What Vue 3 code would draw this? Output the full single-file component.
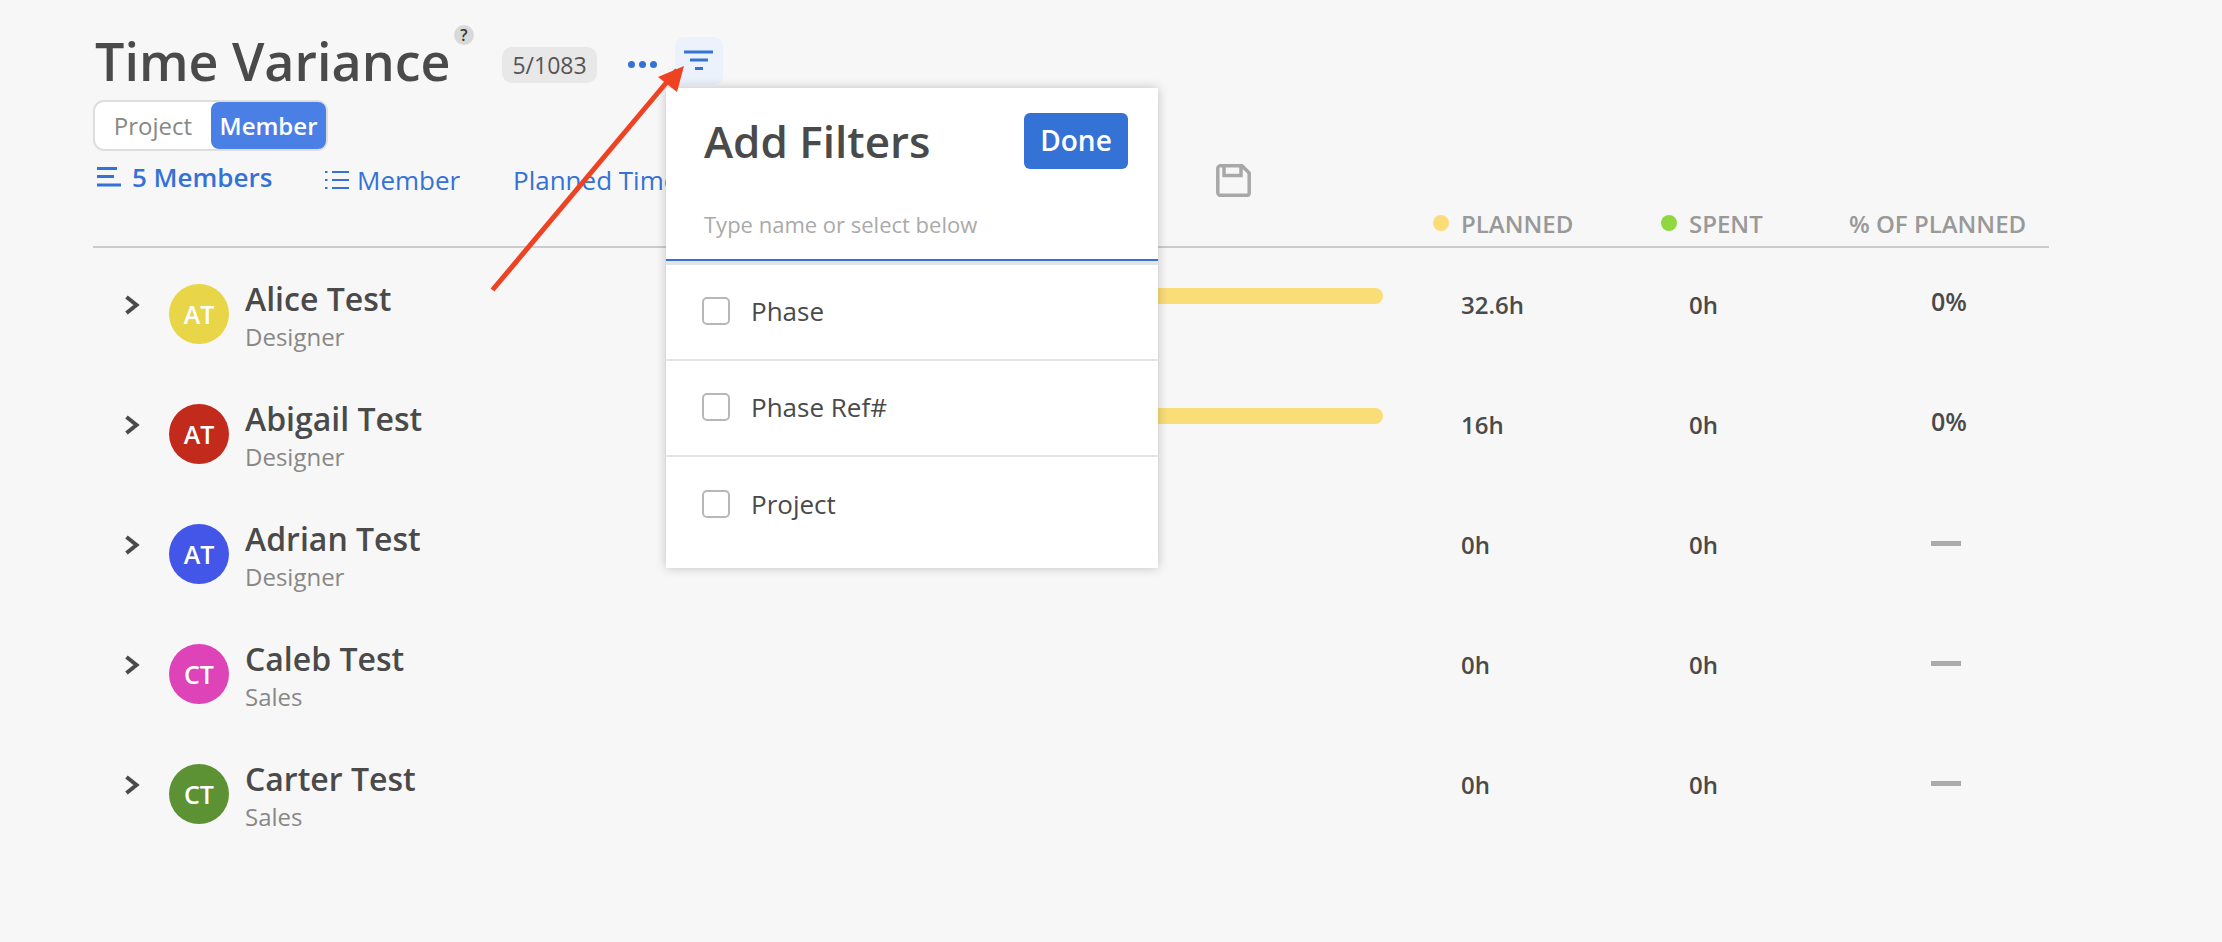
<script setup>
const rows = [
  { name: 'Alice Test', role: 'Designer', init: 'AT', color: '#e8d548', bar: true, planned: '32.6h', spent: '0h', pct: '0%' },
  { name: 'Abigail Test', role: 'Designer', init: 'AT', color: '#c22b1c', bar: true, planned: '16h', spent: '0h', pct: '0%' },
  { name: 'Adrian Test', role: 'Designer', init: 'AT', color: '#4356e8', bar: false, planned: '0h', spent: '0h', pct: '' },
  { name: 'Caleb Test', role: 'Sales', init: 'CT', color: '#de43b8', bar: false, planned: '0h', spent: '0h', pct: '' },
  { name: 'Carter Test', role: 'Sales', init: 'CT', color: '#5c9134', bar: false, planned: '0h', spent: '0h', pct: '' },
]
const filters = ['Phase', 'Phase Ref#', 'Project']
</script>

<template>
  <div class="page">
    <div class="title-row">
      <h1 class="title">Time Variance</h1>
      <span class="help">?</span>
      <span class="count">5/1083</span>
      <span class="dots"><i></i><i></i><i></i></span>
      <span class="filter-btn">
        <svg width="48" height="48" viewBox="0 0 48 48">
          <path d="M9 15h29M15 23h18M20 31.500h8" stroke="#3572d5" stroke-width="3" fill="none" />
        </svg>
      </span>
    </div>

    <div class="toggle">
      <span class="opt">Project</span>
      <span class="opt active">Member</span>
    </div>

    <div class="nav">
      <span class="nav-item first">
        <svg width="24" height="20" viewBox="0 0 24 20">
          <path d="M0 1.500h20M0 9.500h17M0 18h24" stroke="#3572d5" stroke-width="3" fill="none" />
        </svg>
        <b>5 Members</b>
      </span>
      <span class="nav-item second">
        <svg width="24" height="20" viewBox="0 0 24 20">
          <path d="M7 2h17M7 10h17M7 18h17" stroke="#3572d5" stroke-width="2" fill="none" />
          <path d="M0 2h2.500M0 10h2.500M0 18h2.500" stroke="#3572d5" stroke-width="2" fill="none" />
        </svg>
        Member
      </span>
      <span class="nav-item third">Planned Time</span>
      <svg class="save" width="35" height="33" viewBox="0 0 35 33">
        <path d="M3.500 1.800H26L33.200 9V29a2.500 2.500 0 0 1-2.500 2.300H3.500A2.500 2.500 0 0 1 1.800 29V4a2.500 2.500 0 0 1 1.700-2.200Z" stroke="#a8a8a8" stroke-width="3.500" fill="none" />
        <path d="M8 2V11.500H25V2" stroke="#a8a8a8" stroke-width="3.500" fill="none" />
      </svg>
    </div>

    <div class="grid head">
      <span></span>
      <span class="h-cell"><i class="dot yellow"></i>PLANNED</span>
      <span class="h-cell"><i class="dot green"></i>SPENT</span>
      <span class="h-cell">% OF PLANNED</span>
    </div>

    <div class="list">
      <div v-for="r in rows" :key="r.name" class="grid row">
        <div class="left">
          <svg class="chev" width="16" height="20" viewBox="0 0 16 20">
            <path d="M2.500 2L12.500 10L2.500 18" stroke="#4a4a4a" stroke-width="4" fill="none" />
          </svg>
          <span class="avatar" :style="{ background: r.color }">{{ r.init }}</span>
          <div class="who">
            <div class="name">{{ r.name }}</div>
            <div class="role">{{ r.role }}</div>
          </div>
          <span v-if="r.bar" class="bar"></span>
        </div>
        <span class="val">{{ r.planned }}</span>
        <span class="val">{{ r.spent }}</span>
        <span v-if="r.pct" class="pct">{{ r.pct }}</span>
        <span v-else class="dash"></span>
      </div>
    </div>

    <div class="popup">
      <div class="pop-head">
        <span class="pop-title">Add Filters</span>
        <span class="done">Done</span>
      </div>
      <div class="search">Type name or select below</div>
      <div class="items">
        <div v-for="f in filters" :key="f" class="item">
          <span class="box"></span>
          <span>{{ f }}</span>
        </div>
      </div>
    </div>

    <svg class="arrow" width="240" height="260" viewBox="0 0 240 260">
      <path d="M2.500 245L187 25" stroke="#ee4323" stroke-width="5" fill="none" />
      <path d="M194 21L168 32L187 47Z" fill="#ee4323" />
    </svg>
  </div>
</template>

<style scoped>
.page {
  position: relative;
  box-sizing: border-box;
  width: 2222px;
  height: 942px;
  overflow: hidden;
  padding: 37px 0 0 93px;
  background: #f7f7f7;
  font-family: "Open Sans", "Noto Sans", sans-serif;
  color: #4a4a4a;
}
.title-row {
  display: flex;
  align-items: center;
  height: 48px;
}
.title {
  flex: none;
  width: 360px;
  margin: 0 0 0 2px;
  font-size: 52px;
  font-weight: 560;
  line-height: 48px;
  white-space: nowrap;
  color: #4a4a4a;
}
.help {
  align-self: flex-start;
  width: 20px;
  height: 20px;
  margin: -12px 0 0 -1px;
  border-radius: 50%;
  background: #d9d9d9;
  color: #333;
  font-size: 16px;
  font-weight: 600;
  line-height: 20px;
  text-align: center;
}
.count {
  width: 95px;
  height: 36px;
  margin: 7px 0 0 28px;
  border-radius: 10px;
  background: #e8e8e8;
  color: #555;
  font-size: 23px;
  line-height: 36px;
  text-align: center;
}
.dots {
  display: flex;
  gap: 4px;
  margin: 6px 0 0 31px;
}
.dots i {
  width: 7px;
  height: 7px;
  border-radius: 50%;
  background: #3572d5;
}
.filter-btn {
  display: flex;
  width: 48px;
  height: 48px;
  margin-left: 18px;
  border-radius: 9px;
  background: #ebf2fc;
}
.toggle {
  display: flex;
  box-sizing: border-box;
  width: 235px;
  height: 51px;
  margin-top: 15px;
  border: 2px solid #dedede;
  border-radius: 11px;
  background: #fff;
}
.opt {
  width: 117px;
  font-size: 24px;
  line-height: 47px;
  text-align: center;
  color: #888;
}
.active {
  width: 116px;
  border-radius: 8px;
  background: #4a7fe6;
  color: #fff;
  font-weight: 560;
}
.nav {
  display: flex;
  align-items: center;
  height: 59px;
  color: #3572d5;
  font-size: 26px;
}
.nav-item {
  display: flex;
  align-items: center;
  white-space: nowrap;
}
.first {
  box-sizing: border-box;
  width: 232px;
  padding: 0 0 7px 4px;
  gap: 11px;
}
.first b {
  font-weight: 600;
}
.second {
  width: 188px;
  padding-bottom: 2px;
  gap: 8px;
}
.third {
  width: 703px;
  padding-bottom: 2px;
}
.save {
  flex: none;
}
.grid {
  display: grid;
  grid-template-columns: 1340px 228px 188px 200px;
  width: 1956px;
}
.head {
  box-sizing: border-box;
  height: 38px;
  border-bottom: 2px solid #cccccc;
  align-items: start;
}
.h-cell {
  display: flex;
  align-items: center;
  gap: 12px;
  height: 26px;
  color: #999;
  font-size: 24px;
  font-weight: 600;
  white-space: nowrap;
}
.dot {
  width: 16px;
  height: 16px;
  border-radius: 50%;
}
.yellow {
  background: #fbdd78;
}
.green {
  background: #8fd840;
}
.list {
  margin-top: 16px;
}
.row {
  height: 120px;
  align-items: start;
}
.left {
  display: flex;
  align-items: flex-start;
  height: 120px;
}
.chev {
  margin: 31px 0 0 31px;
}
.avatar {
  width: 60px;
  height: 60px;
  margin: 20px 0 0 29px;
  border-radius: 50%;
  color: #fff;
  font-size: 25px;
  font-weight: 600;
  line-height: 60px;
  text-align: center;
}
.who {
  margin: 15px 0 0 16px;
}
.name {
  font-size: 32px;
  font-weight: 580;
  line-height: 40px;
  white-space: nowrap;
}
.role {
  margin-top: 3px;
  color: #888;
  font-size: 24px;
  line-height: 30px;
}
.bar {
  width: 400px;
  height: 16px;
  margin: 24px 50px 0 auto;
  border-radius: 8px;
  background: #fbdd78;
}
.val {
  margin-top: 25px;
  padding-left: 28px;
  font-size: 24px;
  font-weight: 600;
  line-height: 32px;
}
.pct {
  margin-top: 21px;
  padding-left: 82px;
  font-size: 25px;
  font-weight: 600;
  line-height: 32px;
}
.dash {
  width: 30px;
  height: 5px;
  margin: 37px 0 0 82px;
  background: #aaa;
}
.popup {
  position: absolute;
  left: 666px;
  top: 88px;
  box-sizing: border-box;
  width: 492px;
  height: 480px;
  background: #fff;
  box-shadow: 0 0 10px rgba(0, 0, 0, 0.22);
}
.pop-head {
  display: flex;
  align-items: flex-start;
  justify-content: space-between;
  box-sizing: border-box;
  height: 107px;
  padding: 25px 30px 0 38px;
}
.pop-title {
  font-size: 44px;
  font-weight: 560;
  line-height: 56px;
}
.done {
  width: 104px;
  height: 56px;
  border-radius: 6px;
  background: #3572d5;
  color: #fff;
  font-size: 28px;
  font-weight: 560;
  line-height: 54px;
  text-align: center;
}
.search {
  box-sizing: border-box;
  height: 66px;
  padding: 14px 0 0 38px;
  border-bottom: 2px solid #3572d5;
  color: #aaa;
  font-size: 22px;
  line-height: 30px;
}
.items {
  border-top: 4px solid #e4e4e4;
}
.item {
  display: flex;
  align-items: center;
  gap: 21px;
  box-sizing: border-box;
  height: 96px;
  padding: 0 0 2px 36px;
  border-bottom: 2px solid #e4e4e4;
  font-size: 26px;
}
.item:last-child {
  border-bottom: 0;
}
.box {
  box-sizing: border-box;
  width: 28px;
  height: 28px;
  border: 2px solid #b8b8b8;
  border-radius: 5px;
}
.arrow {
  position: absolute;
  left: 490px;
  top: 45px;
}
</style>
